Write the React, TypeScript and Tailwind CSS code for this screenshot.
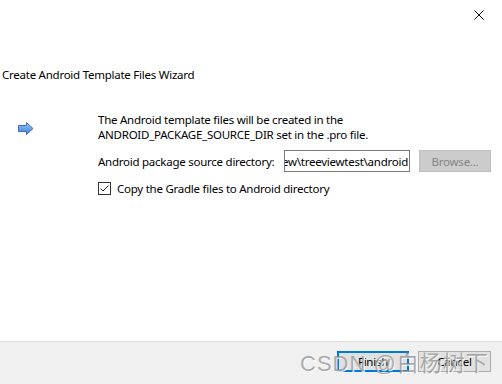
export default function App() {
  return (
    <div
      className="relative w-[502px] h-[384px] flex flex-col bg-white text-black overflow-hidden text-[11.5px] tracking-[-0.25px]"
      style={{ fontFamily: '"Noto Sans", "Open Sans", sans-serif' }}
    >
      {/* Title bar */}
      <div className="h-[30px] flex justify-end items-start">
        <button className="w-[46px] h-[30px] flex items-center justify-center">
          <svg width="10" height="10" viewBox="0 0 10 10">
            <path d="M0.5 0.5 L9.5 9.5 M9.5 0.5 L0.5 9.5" stroke="#111" strokeWidth="1" fill="none" />
          </svg>
        </button>
      </div>

      {/* Wizard title */}
      <div className="pl-[2px] mt-[37px] leading-[15px]">Create Android Template Files Wizard</div>

      {/* Body */}
      <div className="flex mt-[30px] leading-[15px]">
        <div className="w-[98px] pl-[18px] pt-[10px] shrink-0">
          <svg width="16" height="13" viewBox="0 0 16 13">
            <defs>
              <linearGradient id="ag" x1="0" y1="0" x2="0" y2="1">
                <stop offset="0" stopColor="#9cc8f5" />
                <stop offset="1" stopColor="#3a7fd8" />
              </linearGradient>
            </defs>
            <path d="M0.5 3.5 H8.5 V0.5 L15 6.5 L8.5 12.5 V9.5 H0.5 Z" fill="url(#ag)" stroke="#3f6fb8" strokeWidth="1" />
          </svg>
        </div>
        <div className="flex flex-col">
          <p>
            The Android template files will be created in the
            <br />
            ANDROID_PACKAGE_SOURCE_DIR set in the .pro file.
          </p>
          <div className="flex items-center mt-[8px]">
            <span className="whitespace-nowrap w-[186px]">Android package source directory:</span>
            <div className="w-[126px] h-[22px] border border-[#7a7a7a] flex items-center justify-end overflow-hidden pr-[1px]">
              <span className="whitespace-nowrap">ew\treeviewtest\android</span>
            </div>
            <div className="ml-[9px] w-[72px] h-[22px] bg-[#cccccc] border border-[#bfbfbf] flex items-center justify-center text-[#838383]">
              Browse...
            </div>
          </div>
          <label className="flex items-center mt-[9px]">
            <span className="w-[13px] h-[13px] border border-[#333] flex items-center justify-center">
              <svg width="11" height="11" viewBox="0 0 11 11">
                <path d="M1.5 5.5 L4 8 L9.5 2.5" stroke="#222" strokeWidth="1" fill="none" />
              </svg>
            </span>
            <span className="ml-[6px]">Copy the Gradle files to Android directory</span>
          </label>
        </div>
      </div>

      {/* Footer */}
      <div className="mt-auto h-[43px] border-t border-[#dfdfdf] bg-[#f0f0f0] flex items-start justify-end pt-[9px] pr-[11px] gap-[9px]">
        <button className="w-[72px] h-[21px] border-2 border-[#0078d7] bg-[#e1e1e1] flex items-center justify-center leading-none">
          Finish
        </button>
        <button className="w-[73px] h-[21px] border border-[#adadad] bg-[#e1e1e1] flex items-center justify-center leading-none">
          Cancel
        </button>
      </div>

      {/* Watermark */}
      <div
        className="absolute left-[300px] top-[351px] text-[22px] leading-[26px] tracking-[1px] text-[#8a8a8a]/70 whitespace-nowrap pointer-events-none"
        style={{ fontFamily: '"Liberation Sans", "Noto Sans CJK SC", sans-serif', textShadow: '1px 1px 0 rgba(255,255,255,0.8)' }}
      >
        CSDN @白杨树下
      </div>
    </div>
  );
}
